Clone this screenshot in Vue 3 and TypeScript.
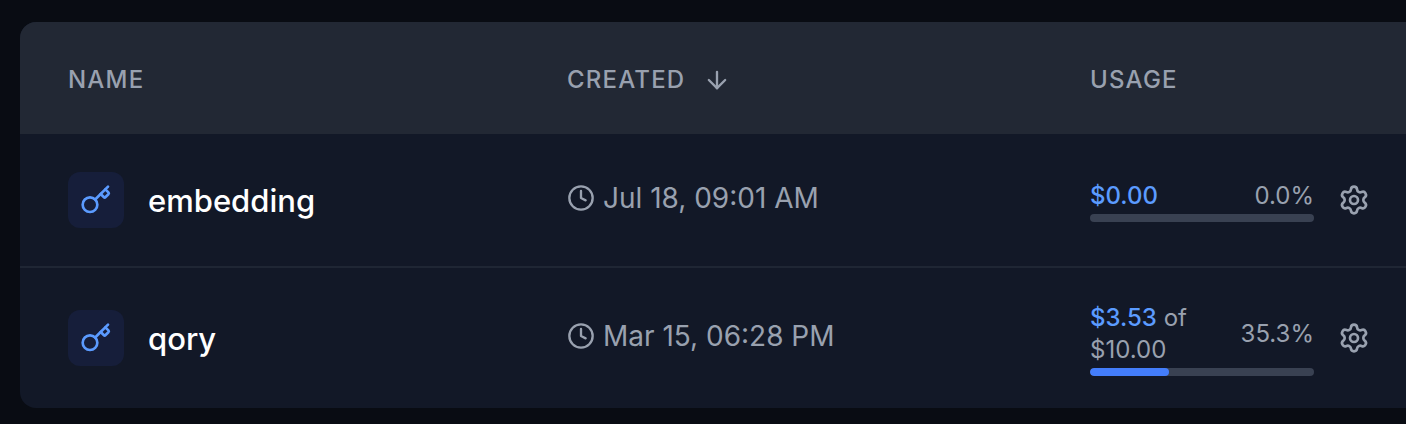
<script setup lang="ts">
interface ApiKey {
  name: string
  created: string
  spent: string
  limit?: string
  percent: number
}

const keys: ApiKey[] = [
  { name: 'embedding', created: 'Jul 18, 09:01 AM', spent: '$0.00', percent: 0 },
  { name: 'qory', created: 'Mar 15, 06:28 PM', spent: '$3.53', limit: '$10.00', percent: 35.3 },
]
</script>

<template>
  <main class="page">
    <div class="card">
      <table class="keys">
        <colgroup>
          <col class="col-name" />
          <col />
          <col class="col-usage" />
        </colgroup>
        <thead>
          <tr>
            <th scope="col">NAME</th>
            <th scope="col" aria-sort="descending">
              <button type="button" class="sort">
                CREATED
                <svg class="icon-sm" viewBox="0 0 24 24" aria-hidden="true">
                  <path d="M12 5v14" />
                  <path d="m19 12-7 7-7-7" />
                </svg>
              </button>
            </th>
            <th scope="col">USAGE</th>
          </tr>
        </thead>
        <tbody>
          <tr v-for="key in keys" :key="key.name">
            <td>
              <div class="name">
                <span class="badge">
                  <svg class="icon" viewBox="0 0 24 24" aria-hidden="true">
                    <path d="m15.5 7.5 2.3 2.3a1 1 0 0 0 1.4 0l2.1-2.1a1 1 0 0 0 0-1.4L19 4" />
                    <path d="m21 2-9.6 9.6" />
                    <circle cx="7.5" cy="15.5" r="5.5" />
                  </svg>
                </span>
                <span class="label">{{ key.name }}</span>
              </div>
            </td>
            <td class="created-cell">
              <div class="created">
                <svg class="icon-sm" viewBox="0 0 24 24" aria-hidden="true">
                  <circle cx="12" cy="12" r="10" />
                  <path d="M12 6v6l4 2" />
                </svg>
                <time>{{ key.created }}</time>
              </div>
            </td>
            <td class="usage-cell">
              <div class="usage">
                <div class="meter">
                  <div class="figures">
                    <span class="amount">
                      <span class="spent">{{ key.spent }}</span>
                      <template v-if="key.limit">
                        {{ ' ' }}<span>of</span>{{ ' ' }}<span>{{ key.limit }}</span>
                      </template>
                    </span>
                    <span>{{ key.percent.toFixed(1) }}%</span>
                  </div>
                  <div
                    class="track"
                    role="progressbar"
                    :aria-valuenow="key.percent"
                    aria-valuemin="0"
                    aria-valuemax="100"
                    :aria-label="`Usage of ${key.name}`"
                  >
                    <div class="fill" :style="{ width: key.percent + '%' }"></div>
                  </div>
                </div>
                <button type="button" class="settings" :aria-label="`Settings for ${key.name}`">
                  <svg class="icon" viewBox="0 0 24 24" aria-hidden="true">
                    <path
                      d="M9.671 4.136a2.34 2.34 0 0 1 4.659 0 2.34 2.34 0 0 0 3.319 1.915 2.34 2.34 0 0 1 2.33 4.033 2.34 2.34 0 0 0 0 3.831 2.34 2.34 0 0 1-2.33 4.033 2.34 2.34 0 0 0-3.319 1.915 2.34 2.34 0 0 1-4.659 0 2.34 2.34 0 0 0-3.32-1.915 2.34 2.34 0 0 1-2.33-4.033 2.34 2.34 0 0 0 0-3.831A2.34 2.34 0 0 1 6.35 6.051a2.34 2.34 0 0 0 3.319-1.915"
                    />
                    <circle cx="12" cy="12" r="3" />
                  </svg>
                </button>
              </div>
            </td>
          </tr>
        </tbody>
      </table>
    </div>
  </main>
</template>

<style>
body {
  background: #090c13;
}
</style>

<style scoped>
.page {
  padding: 22px 0 16px 20px;
  font-family: Inter, 'Liberation Sans', sans-serif;
  color: #99a1af;
}

.card {
  overflow: hidden;
  border-radius: 16px 0 0 16px;
  background: #121827;
}

.keys {
  width: 100%;
  table-layout: fixed;
  border-collapse: separate;
  border-spacing: 0;
}

.col-name {
  width: 36%;
}

.col-usage {
  width: 364px;
}

th {
  height: 112px;
  padding: 4px 48px 0;
  background: #222834;
  font-size: 24px;
  line-height: 32px;
  font-weight: 500;
  letter-spacing: 0.05em;
  text-align: left;
  box-sizing: border-box;
}

td {
  height: 134px;
  padding: 32px 0 32px 48px;
  box-sizing: border-box;
  vertical-align: middle;
}

tr:not(:last-child) > td {
  border-bottom: 2px solid #1f2634;
}

button {
  display: flex;
  align-items: center;
  padding: 0;
  border: 0;
  background: none;
  color: inherit;
  font: inherit;
  letter-spacing: inherit;
  cursor: pointer;
}

.sort {
  gap: 18px;
}

svg {
  display: block;
  flex: none;
  fill: none;
  stroke: currentColor;
  stroke-width: 2;
  stroke-linecap: round;
  stroke-linejoin: round;
}

.icon {
  width: 32px;
  height: 32px;
}

.icon-sm {
  width: 28px;
  height: 28px;
}

.name {
  display: flex;
  align-items: center;
  gap: 24px;
}

.badge {
  display: grid;
  place-items: center;
  width: 56px;
  height: 56px;
  border-radius: 12px;
  background: #161e3a;
  color: #5b9bff;
}

.label {
  padding-top: 2px;
  color: #fff;
  font-size: 31px;
  line-height: 48px;
  font-weight: 500;
}

.created-cell {
  padding-bottom: 36px;
}

.created {
  display: flex;
  align-items: center;
  gap: 8px;
  font-size: 28px;
  line-height: 40px;
}

.usage-cell {
  padding-right: 36px;
}

.usage {
  display: flex;
  align-items: center;
  gap: 24px;
}

.meter {
  flex: 1;
}

.figures {
  display: flex;
  align-items: center;
  justify-content: space-between;
  gap: 40px;
  padding: 2px 0;
  font-size: 24px;
  line-height: 32px;
}

.spent {
  color: #5b9bff;
  font-weight: 500;
}

.track {
  height: 8px;
  overflow: hidden;
  border-radius: 4px;
  background: #394152;
}

.fill {
  height: 100%;
  border-radius: 4px;
  background: #437dfb;
}
</style>
